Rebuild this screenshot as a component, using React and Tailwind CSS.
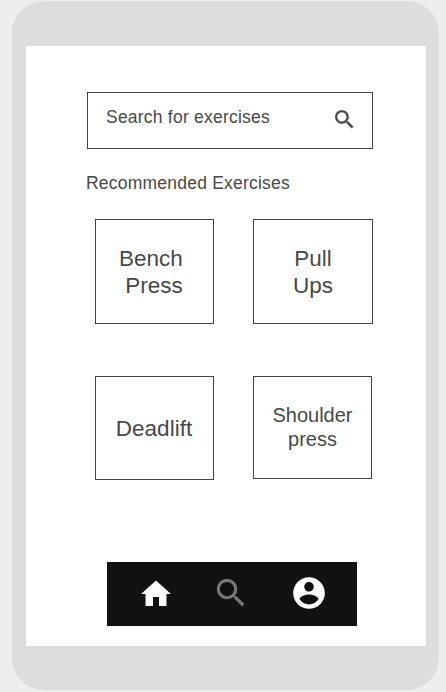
const SEARCH =
  "M15.5 14h-.79l-.28-.27A6.471 6.471 0 0 0 16 9.5 6.5 6.5 0 1 0 9.5 16c1.61 0 3.09-.59 4.23-1.57l.27.28v.79l5 4.99L20.49 19l-4.99-5zm-6 0C7.01 14 5 11.99 5 9.5S7.01 5 9.5 5 14 7.01 14 9.5 11.99 14 9.5 14z";
const HOME = "M10 20v-6h4v6h5v-8h3L12 3 2 12h3v8z";
const ACCOUNT =
  "M12 2C6.48 2 2 6.48 2 12s4.48 10 10 10 10-4.48 10-10S17.52 2 12 2zm0 3c1.66 0 3 1.34 3 3s-1.34 3-3 3-3-1.34-3-3 1.34-3 3-3zm0 14.2c-2.5 0-4.71-1.28-6-3.22.03-1.99 4-3.08 6-3.08 1.99 0 5.97 1.09 6 3.08-1.29 1.94-3.5 3.22-6 3.22z";

function Icon({ path, className }) {
  return (
    <svg viewBox="0 0 24 24" fill="currentColor" className={`shrink-0 ${className}`} aria-hidden="true">
      <path d={path} />
    </svg>
  );
}

function ExerciseCard({ className, children }) {
  return (
    <button
      type="button"
      className={`flex items-center justify-center border border-[#444444] text-center whitespace-pre ${className}`}
    >
      {children}
    </button>
  );
}

export default function App() {
  return (
    <div className="h-[692px] w-[446px] overflow-hidden bg-[#eeeeee] pt-px pl-3 font-['Liberation_Sans',Arial,sans-serif] text-[#484848]">
      <div className="h-[689px] w-[427px] rounded-[32px] bg-[#dddddd] pt-[45px] pl-3.5">
        <main className="flex h-[600px] w-[400px] flex-col bg-white pt-[46px]">
          <div className="ml-[61px] flex h-[57px] w-[286px] items-start justify-between border border-[#444444] pt-3.5 pr-[15px] pl-[18px]">
            <span className="text-[17.5px] leading-5 tracking-[0.22px]">Search for exercises</span>
            <Icon path={SEARCH} className="size-[25px] stroke-current stroke-[0.3]" />
          </div>

          <h1 className="mt-6 ml-[60px] text-[17.5px] leading-5 tracking-[0.22px]">Recommended Exercises</h1>

          <div className="mt-[26px] ml-[69px] flex items-start gap-[39px] text-[22.5px] leading-[27px]">
            <ExerciseCard className="h-[105px] w-[119px] pr-px">{"Bench \nPress"}</ExerciseCard>
            <ExerciseCard className="h-[105px] w-[120px]">{"Pull\nUps"}</ExerciseCard>
          </div>
          <div className="mt-[52px] ml-[69px] flex items-start gap-[39px] text-[22.5px] leading-[27px]">
            <ExerciseCard className="h-[104px] w-[119px] pr-px">Deadlift</ExerciseCard>
            <ExerciseCard className="h-[103px] w-[119px] pb-0.5 text-[20px] leading-6">{"Shoulder\npress"}</ExerciseCard>
          </div>

          <nav className="mt-[82px] ml-[81px] flex h-16 w-[250px] items-start bg-[#111111] pt-[11.5px] pl-[31px]">
            <Icon path={HOME} className="mt-[2.5px] size-9 text-white" />
            <Icon path={SEARCH} className="ml-[37.5px] size-[38px] text-[#777777]" />
            <Icon path={ACCOUNT} className="ml-10 size-[38px] text-white" />
          </nav>
        </main>
      </div>
    </div>
  );
}
